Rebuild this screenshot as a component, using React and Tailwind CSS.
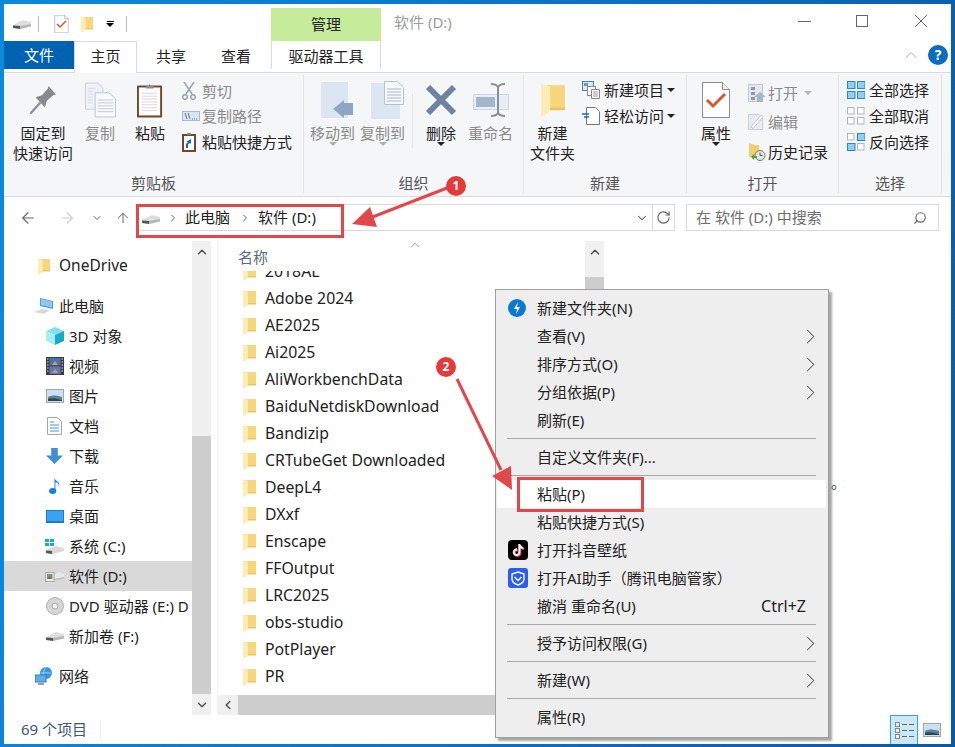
import React from 'react';
import { FaTiktok } from 'react-icons/fa';
import { ChevronUp, ChevronDown, ChevronLeft, ChevronRight, ArrowLeft, ArrowRight, ArrowUp, RotateCw, Search } from 'lucide-react';

/* ---------- icons ---------- */
const Folder = ({ className = 'w-[13px] h-[18px]' }) => (
  <svg viewBox="0 0 13 18" className={className}>
    <path d="M3 1h10v13H5z" fill="#f6d77c" />
    <path d="M0 0l5 2v11l-1 3-4 2z" fill="#fdedb4" />
    <path d="M5 13h8v1.500H4.500z" fill="#ebc565" />
  </svg>
);

const Drive = ({ className = 'w-[18px] h-[10px]' }) => (
  <svg viewBox="0 0 18 10" className={className}>
    <path d="M0 6l10-5 8 2v3L6 9 0 8.500z" fill="#dedede" />
    <path d="M0 6.500l7 .5v3l-7-1z" fill="#555" />
    <path d="M7 7l11-2v2.500L7 10z" fill="#b5b5b5" />
  </svg>
);

const CheckDoc = ({ className }) => (
  <svg viewBox="0 0 28 36" className={className}>
    <path d="M.5.500h20l7 7v28H.500z" fill="#fff" stroke="#8c8c8c" />
    <path d="M20.500.500v7h7" fill="#eee" stroke="#8c8c8c" />
    <path d="M5 18l6 6 12-12" fill="none" stroke="#d9572b" strokeWidth="3" />
  </svg>
);

const Pin = () => (
  <svg viewBox="0 0 28 30" className="w-[26px] h-[28px]">
    <path d="M0 30l11-12" stroke="#8a8d91" strokeWidth="2.500" />
    <path d="M6 12l7-2 6-7 1-3 8 9-3 1-7 6-2 7z" fill="#868a8e" />
  </svg>
);

const Pages = () => (
  <svg viewBox="0 0 32 36" className="w-[31px] h-[36px]">
    <path d="M.5.500h13l5 5v22H.500z" fill="#eef2f8" stroke="#c5d0de" />
    <path d="M10.500 10.500h14l7 6v19h-21z" fill="#f7f9fc" stroke="#b9c6d8" />
    <path d="M13 18h16M13 21h16M13 24h16M13 27h16M13 30h16" stroke="#c0cbdb" />
    <path d="M3 6h8M3 9h5M3 12h5M3 15h5M3 18h5M3 21h5" stroke="#d4dce8" />
  </svg>
);

const Clipboard = () => (
  <svg viewBox="0 0 28 37" className="w-[27px] h-[37px]">
    <rect x="0" y="3" width="26" height="33" rx="1" fill="#6d4a2e" />
    <rect x="2" y="5" width="22" height="29" fill="#fff" />
    <path d="M5 11h16M5 14h16M5 17h16M5 20h16M5 23h16M5 26h16M5 29h16" stroke="#d5d5d5" />
    <path d="M9 6V3h3l1-2 1 2h3v3z" fill="#8f8f8f" />
  </svg>
);

const Scissors = () => (
  <svg viewBox="0 0 14 18" className="w-[14px] h-[18px]" fill="none" stroke="#9aa3ad" strokeWidth="1.500">
    <path d="M2 0l8 12M12 0L4 12" />
    <circle cx="3" cy="15" r="2.300" />
    <circle cx="11" cy="15" r="2.300" />
  </svg>
);

const CopyPath = () => (
  <svg viewBox="0 0 18 10" className="w-[18px] h-[10px]">
    <rect x=".5" y=".5" width="17" height="9" fill="#dbe6f4" stroke="#a9b8cb" />
    <path d="M3 2l2 6M6 2l2 6M10 8h1M12 8h1M14 8h1" stroke="#64748b" />
  </svg>
);

const PasteLink = () => (
  <svg viewBox="0 0 14 20" className="w-[14px] h-[20px]">
    <rect x="0" y="2" width="14" height="18" fill="#6d4a2e" />
    <rect x="2" y="4" width="10" height="14" fill="#fff" />
    <path d="M5 3V1h4v2z" fill="#888" />
    <path d="M4 16v-4l2-2H4l5-3v5l-1.500-1L6 12.500V16z" fill="#1c66b8" />
  </svg>
);

const MoveTo = () => (
  <svg viewBox="0 0 33 36" className="w-[33px] h-[36px] ml-[10px]">
    <rect x="0" y="0" width="27" height="36" fill="#dce5f2" />
    <path d="M12 27l11-9v3h9v12h-9v3z" fill="#8fa6c2" />
  </svg>
);

const CopyTo = () => (
  <svg viewBox="0 0 33 38" className="w-[33px] h-[38px] ml-[10px]">
    <rect x="0" y="2" width="29" height="36" fill="#dce5f2" />
    <path d="M13.500 .500h13l6 6v17h-19z" fill="#f7f9fc" stroke="#b4c1d3" />
    <path d="M16 8h14M16 11h14M16 14h14M16 17h14M16 20h14" stroke="#aab7c9" />
  </svg>
);

const DeleteX = () => (
  <svg viewBox="0 0 32 32" className="w-[32px] h-[32px]">
    <path d="M3 3l26 26M29 3L3 29" stroke="#6d83a1" strokeWidth="6" />
  </svg>
);

const Rename = () => (
  <svg viewBox="0 0 36 34" className="w-[36px] h-[34px]">
    <rect x=".5" y="11.500" width="35" height="15" fill="#e8eef6" stroke="#cbd6e4" />
    <rect x="3" y="14" width="19" height="10" fill="#a5b5ca" />
    <path d="M18 1c4 0 6 1 7 3 1-2 3-3 7-3M25 4v26M18 33c4 0 6-1 7-3 1 2 3 3 7 3" fill="none" stroke="#8c9096" strokeWidth="2" />
  </svg>
);

const NewItem = () => (
  <svg viewBox="0 0 18 18" className="w-[18px] h-[18px]">
    <rect x=".5" y=".5" width="11" height="9" fill="#dfe9f5" stroke="#4d7fae" />
    <rect x="2" y="2" width="4" height="3" fill="#5e9bd2" />
    <rect x="5.500" y="5.500" width="8" height="9" fill="#fff" stroke="#888" />
    <path d="M9.500 8.500h8v9h-8z" fill="#fff" stroke="#888" />
    <path d="M11 11h5M11 13h5M11 15h5" stroke="#999" />
  </svg>
);

const EasyAccess = () => (
  <svg viewBox="0 0 18 18" className="w-[18px] h-[18px]">
    <path d="M4.500.500h9l4 4v13h-13z" fill="#fff" stroke="#777" />
    <path d="M0 7h7M2 10h5" stroke="#1b6cb5" strokeWidth="1.300" />
  </svg>
);

const OpenIcon = () => (
  <svg viewBox="0 0 18 18" className="w-[18px] h-[18px]">
    <rect x=".5" y=".5" width="14" height="17" fill="#e3e8ef" stroke="#c0c9d4" />
    <path d="M3 3h4v3H3zM3 8h4v3H3zM3 13h4v3H3z" fill="#8d99a8" />
    <path d="M12 8l6 5h-3v5H9v-5H6z" fill="#a8b6c7" />
  </svg>
);

const EditIcon = () => (
  <svg viewBox="0 0 18 18" className="w-[16px] h-[18px]">
    <path d="M.5.500h12l4 4v13H.500z" fill="#e6ebf2" stroke="#c3ccd8" />
    <path d="M3 15L15 1l2 2L6 16z" fill="#fff" stroke="#b7c2d0" />
  </svg>
);

const HistoryIcon = () => (
  <svg viewBox="0 0 18 18" className="w-[18px] h-[18px]">
    <path d="M1 0l6 2h4v12H1z" fill="#f2cf6e" />
    <circle cx="12" cy="12.500" r="5" fill="#e4e4e4" stroke="#777" />
    <path d="M12 9.500v3h2.500" stroke="#555" fill="none" />
    <path d="M3 14l3-3v2h3v2H6v2z" fill="#46a53a" />
  </svg>
);

const Squares = ({ cells }) => (
  <svg viewBox="0 0 18 18" className="w-[18px] h-[18px]">
    {cells.map((on, i) => {
      const x = i % 2 === 0 ? 0.5 : 10.5;
      const y = i < 2 ? 0.5 : 10.5;
      return on ? (
        <rect key={i} x={x} y={y} width="7.500" height="7" fill="#93cdf3" stroke="#2d86c8" />
      ) : (
        <rect key={i} x={x} y={y} width="6.500" height="6.500" fill="#fff" stroke="#b5b5b5" />
      );
    })}
  </svg>
);

const PcIcon = () => (
  <svg viewBox="0 0 20 18" className="w-[20px] h-[18px]">
    <path d="M6 1l13 3v8L6 9z" fill="#4a9be0" />
    <path d="M7 2l11 2.500v6L7 8z" fill="#8fc8f2" />
    <path d="M0 15l8-3 8 1-6 4z" fill="#d8d8d8" />
  </svg>
);

const Cube = () => (
  <svg viewBox="0 0 18 18" className="w-[18px] h-[18px]">
    <path d="M9 0l9 4-9 4-9-4z" fill="#7fe0ef" />
    <path d="M0 4l9 4v10l-9-4z" fill="#a9ecf6" />
    <path d="M18 4L9 8v10l9-4z" fill="#19a9c9" />
  </svg>
);

const Film = () => (
  <svg viewBox="0 0 18 18" className="w-[18px] h-[18px]">
    <rect width="18" height="18" fill="#3c3c3c" />
    <rect x="3.500" y="1" width="11" height="7.500" fill="#4b6fb7" />
    <rect x="3.500" y="9.500" width="11" height="7.500" fill="#5e78bf" />
    <path d="M6 8l3-4 3 4zM6 16l3-4 3 4z" fill="#c9a342" />
    <path d="M1 2h1.500M1 5h1.500M1 8h1.500M1 11h1.500M1 14h1.500M15.500 2H17M15.500 5H17M15.500 8H17M15.500 11H17M15.500 14H17" stroke="#ddd" />
  </svg>
);

const Picture = ({ className = 'w-[18px] h-[14px]' }) => (
  <svg viewBox="0 0 18 14" className={className}>
    <rect x=".5" y=".5" width="17" height="13" fill="#c8e0f2" stroke="#a5a5a5" />
    <path d="M2 8c4-2 9-2 14 0v4H2z" fill="#5e7f8f" />
    <path d="M2 10c5-1 9 0 14 1v1H2z" fill="#2d4552" />
  </svg>
);

const DocIcon = () => (
  <svg viewBox="0 0 15 18" className="w-[15px] h-[18px]">
    <path d="M.5.500h10l4 4v13H.500z" fill="#fbfbfb" stroke="#a5a5a5" />
    <path d="M3 5h4M3 8h9M3 11h9M3 14h9" stroke="#4b9ad5" />
  </svg>
);

const DownIcon = () => (
  <svg viewBox="0 0 18 17" className="w-[17px] h-[16px]">
    <path d="M5.500 0h7v8H18l-9 9-9-9h5.500z" fill="#3f8edb" />
  </svg>
);

const Music = () => (
  <svg viewBox="0 0 12 18" className="w-[11px] h-[18px]">
    <ellipse cx="4" cy="14.500" rx="4" ry="3.300" fill="#1682dc" />
    <path d="M7 1v13H6V0c1 4 6 4 5 9-1-3-2-4-4-4z" fill="#1682dc" />
  </svg>
);

const Desktop = () => (
  <svg viewBox="0 0 18 13" className="w-[18px] h-[13px]">
    <rect width="18" height="13" fill="#0f7fd6" />
    <rect x="1" y="1" width="16" height="10" fill="#3ba3ef" />
  </svg>
);

const WinDrive = () => (
  <svg viewBox="0 0 20 15" className="w-[20px] h-[15px]">
    <path d="M0 0h4v3H0zM5 0h4v3H5zM0 4h4v3H0zM5 4h4v3H5z" fill="#18a9d8" />
    <path d="M1 11l10-4 8 2v3l-12 3-6-1z" fill="#d9d9d9" />
    <path d="M1 11.500l6 .5v3l-6-1z" fill="#555" />
  </svg>
);

const PicDrive = () => (
  <svg viewBox="0 0 19 11" className="w-[19px] h-[11px]">
    <path d="M8 5l6-4 5 2v3L8 9z" fill="#e8e8e8" />
    <path d="M9 8l10-2v1.500L9 9.500z" fill="#bdbdbd" />
    <rect x=".5" y="1.500" width="8.500" height="9" fill="#eee" stroke="#aaa" />
    <path d="M2 3h5.500v5H2z" fill="#6f9a7a" />
    <path d="M2.500 8l2-3 2 3z" fill="#a84f4f" />
  </svg>
);

const Dvd = () => (
  <svg viewBox="0 0 18 18" className="w-[18px] h-[18px]">
    <circle cx="9" cy="9" r="8.500" fill="#d6d6d6" stroke="#b0b0b0" />
    <circle cx="9" cy="9" r="3" fill="#f1f1f1" stroke="#aaa" />
  </svg>
);

const NetIcon = () => (
  <svg viewBox="0 0 18 18" className="w-[18px] h-[18px]">
    <circle cx="11" cy="6" r="6" fill="#3b95d9" />
    <path d="M6 6h10M11 0c-3 3-3 9 0 12" stroke="#9fd0f2" fill="none" />
    <rect x="0" y="8" width="11" height="7" fill="#5cb0ea" stroke="#2c7fc0" />
    <path d="M3 17h6" stroke="#9a9a9a" strokeWidth="2" />
  </svg>
);

const SmallDown = ({ className = 'border-t-[#222]' }) => (
  <span className={`inline-block w-0 h-0 border-x-[4px] border-x-transparent border-t-[4px] ${className}`} />
);

const MenuArrow = () => (
  <svg viewBox="0 0 10 18" className="w-[9px] h-[15px] ml-auto mr-[11px]" fill="none" stroke="#333" strokeWidth="1.200">
    <path d="M1 1l8 8-8 8" />
  </svg>
);

/* ---------- ribbon ---------- */
const BigButton = ({ icon, lines, muted, arrow, className = '' }) => (
  <div className={`flex flex-col items-center pt-[7px] ${className}`}>
    <div className="h-[36px] flex items-center justify-center">{icon}</div>
    <div className={`mt-[5px] text-center leading-[20px] whitespace-nowrap ${muted ? 'text-[#8a8a8a]' : 'text-[#222]'}`}>
      {lines.map((l) => (
        <div key={l}>{l}</div>
      ))}
    </div>
    {arrow && (
      <div className="flex -mt-[1px]">
        <SmallDown className={muted ? 'border-t-[#b0b0b0]' : 'border-t-[#222]'} />
      </div>
    )}
  </div>
);

const SmallButton = ({ icon, label, muted, arrow, className = '' }) => (
  <div className={`flex items-center whitespace-nowrap leading-[20px] ${muted ? 'text-[#8a8a8a]' : 'text-[#222]'} ${className}`}>
    <span className="w-[20px] flex justify-start">{icon}</span>
    <span>{label}</span>
    {arrow}
  </div>
);

const Group = ({ width, label, children, last }) => (
  <div className={`${width} shrink-0 h-[118px] flex flex-col ${last ? '' : 'border-r border-[#e2e3e4]'}`}>
    <div className="flex h-[98px]">{children}</div>
    <div className="h-[20px] leading-[20px] text-center text-[#555]">{label}</div>
  </div>
);

const Ribbon = () => (
  <div className="h-[124px] bg-[#f5f6f7] border-b border-[#dadbdc] flex pt-[2px]">
    <Group width="w-[300px]" label="剪贴板">
      <BigButton icon={<Pin />} lines={['固定到', '快速访问']} className="w-[60px] ml-[9px]" />
      <BigButton icon={<Pages />} lines={['复制']} muted className="w-[40px] ml-[7px]" />
      <BigButton icon={<Clipboard />} lines={['粘贴']} className="w-[40px] ml-[10px]" />
      <div className="ml-[12px] pt-[3px] flex flex-col">
        <SmallButton icon={<Scissors />} label="剪切" muted className="h-[25px]" />
        <SmallButton icon={<CopyPath />} label="复制路径" muted className="h-[26px]" />
        <SmallButton icon={<PasteLink />} label="粘贴快捷方式" className="h-[26px]" />
      </div>
    </Group>
    <Group width="w-[220px]" label="组织">
      <BigButton icon={<MoveTo />} lines={['移动到']} muted arrow className="w-[45px] ml-[6px]" />
      <BigButton icon={<CopyTo />} lines={['复制到']} muted arrow className="w-[45px] ml-[5px]" />
      <div className="w-px h-[54px] mt-[19px] ml-[7px] bg-[#e2e3e4]" />
      <BigButton icon={<DeleteX />} lines={['删除']} arrow className="w-[30px] ml-[13px]" />
      <BigButton icon={<Rename />} lines={['重命名']} muted className="w-[45px] ml-[12px]" />
    </Group>
    <Group width="w-[163px]" label="新建">
      <BigButton icon={<Folder className="w-[24px] h-[34px]" />} lines={['新建', '文件夹']} className="w-[45px] ml-[6px]" />
      <div className="ml-[7px] pt-[2px] flex flex-col">
        <SmallButton
          icon={<NewItem />}
          label="新建项目"
          className="h-[26px] [&>span:first-child]:w-[22px]"
          arrow={<span className="ml-[3px] flex"><SmallDown /></span>}
        />
        <SmallButton
          icon={<EasyAccess />}
          label="轻松访问"
          className="h-[26px] [&>span:first-child]:w-[22px]"
          arrow={<span className="ml-[3px] flex"><SmallDown /></span>}
        />
      </div>
    </Group>
    <Group width="w-[152px]" label="打开">
      <BigButton icon={<CheckDoc className="w-[28px] h-[36px]" />} lines={['属性']} arrow className="w-[30px] ml-[14px]" />
      <div className="ml-[17px] pt-[5px] flex flex-col">
        <SmallButton
          icon={<OpenIcon />}
          label="打开"
          muted
          className="h-[26px] mb-[1px]"
          arrow={<span className="ml-[6px] flex"><SmallDown className="border-t-[#b8b8b8]" /></span>}
        />
        <SmallButton icon={<EditIcon />} label="编辑" muted className="h-[30px]" />
        <SmallButton icon={<HistoryIcon />} label="历史记录" className="h-[30px]" />
      </div>
    </Group>
    <Group width="w-[103px]" label="选择">
      <div className="ml-[8px] pt-[2px] flex flex-col">
        <SmallButton icon={<Squares cells={[1, 1, 1, 1]} />} label="全部选择" className="h-[26px] [&>span:first-child]:w-[22px]" />
        <SmallButton icon={<Squares cells={[0, 0, 0, 0]} />} label="全部取消" className="h-[26px] [&>span:first-child]:w-[22px]" />
        <SmallButton icon={<Squares cells={[0, 1, 1, 0]} />} label="反向选择" className="h-[26px] [&>span:first-child]:w-[22px]" />
      </div>
    </Group>
  </div>
);

/* ---------- sidebar / list data ---------- */
const navItems = [
  { icon: <Folder className="w-[12px] h-[17px]" />, label: 'OneDrive', top: true, first: true, wide: true },
  { icon: <PcIcon />, label: '此电脑', top: true, gap: true },
  { icon: <Cube />, label: '3D 对象' },
  { icon: <Film />, label: '视频' },
  { icon: <Picture />, label: '图片' },
  { icon: <DocIcon />, label: '文档' },
  { icon: <DownIcon />, label: '下载' },
  { icon: <Music />, label: '音乐' },
  { icon: <Desktop />, label: '桌面' },
  { icon: <WinDrive />, label: '系统 (C:)' },
  { icon: <PicDrive />, label: '软件 (D:)', selected: true },
  { icon: <Dvd />, label: 'DVD 驱动器 (E:) D' },
  { icon: <Drive />, label: '新加卷 (F:)' },
  { icon: <NetIcon />, label: '网络', top: true, gap: true },
];

const files = [
  '2018AL', 'Adobe 2024', 'AE2025', 'Ai2025', 'AliWorkbenchData', 'BaiduNetdiskDownload', 'Bandizip',
  'CRTubeGet Downloaded', 'DeepL4', 'DXxf', 'Enscape', 'FFOutput', 'LRC2025', 'obs-studio', 'PotPlayer', 'PR',
];

const ScrollBtn = ({ children }) => (
  <div className="h-[21px] shrink-0 flex items-center justify-center bg-[#f0f0f0] text-[#505050]">{children}</div>
);

/* ---------- context menu ---------- */
const menu = [
  { label: '新建文件夹(N)', icon: 'bolt' },
  { label: '查看(V)', sub: true },
  { label: '排序方式(O)', sub: true },
  { label: '分组依据(P)', sub: true },
  { label: '刷新(E)' },
  { sep: true },
  { label: '自定义文件夹(F)...' },
  { sep: true },
  { label: '粘贴(P)', hot: true },
  { label: '粘贴快捷方式(S)' },
  { label: '打开抖音壁纸', icon: 'tiktok' },
  { label: '打开AI助手（腾讯电脑管家）', icon: 'shield' },
  { label: '撤消 重命名(U)', shortcut: 'Ctrl+Z' },
  { sep: true },
  { label: '授予访问权限(G)', sub: true },
  { sep: true },
  { label: '新建(W)', sub: true },
  { sep: true },
  { label: '属性(R)' },
];

const MenuIcon = ({ name }) => {
  if (name === 'bolt') {
    return (
      <svg viewBox="0 0 18 18" className="w-[18px] h-[18px]">
        <circle cx="9" cy="9" r="9" fill="#0a78d4" />
        <path d="M10 3L6 10h3l-1 5 4-7H9z" fill="#fff" />
      </svg>
    );
  }
  if (name === 'tiktok') {
    return (
      <span className="w-[20px] h-[20px] rounded-[4px] bg-black flex items-center justify-center text-white text-[12px]">
        <FaTiktok className="drop-shadow-[1px_1px_0_#ff2d55]" />
      </span>
    );
  }
  return (
    <span className="w-[20px] h-[20px] rounded-[3px] bg-[#2b5df0] flex items-center justify-center">
      <svg viewBox="0 0 14 15" className="w-[14px] h-[15px]" fill="none" stroke="#fff" strokeWidth="1.400">
        <path d="M7 1l6 2v5c0 3-3 5-6 6-3-1-6-3-6-6V3z" />
        <path d="M3.500 6L7 9.500 10.500 6" />
      </svg>
    </span>
  );
};

const ContextMenu = () => (
  <div className="absolute left-[495px] top-[289px] w-[334px] h-[449px] bg-[#eeeeee] border border-[#a0a0a0] shadow-[3px_3px_2px_rgba(0,0,0,0.35)] py-[4px] pl-[1px] pr-[2px]">
    {menu.map((m, i) =>
      m.sep ? (
        <div key={i} className="h-[9px] flex items-center pl-[10px] pr-[10px]">
          <div className="h-px w-full bg-[#a8a8a8]" />
        </div>
      ) : (
        <div key={i} className={`h-[28px] flex items-center text-[#222] ${m.hot ? 'bg-white' : ''}`}>
          <span className="w-[40px] pl-[11px] flex justify-start shrink-0">{m.icon && <MenuIcon name={m.icon} />}</span>
          <span className="whitespace-nowrap">{m.label}</span>
          {m.sub && <MenuArrow />}
          {m.shortcut && <span className="ml-auto mr-[20px] text-[16px]">{m.shortcut}</span>}
        </div>
      )
    )}
  </div>
);

/* ---------- page ---------- */
export default function App() {
  return (
    <div className="relative w-[955px] h-[747px] overflow-hidden bg-[linear-gradient(100deg,#0a8ade_0%,#0a6fc4_60%,#0a59a6_100%)] pt-[4px] pl-[4px] pr-[4px] pb-[3px] text-[15px] font-['Noto_Sans','Noto_Sans_CJK_SC',sans-serif]">
      <div className="w-[947px] h-[740px] bg-white flex flex-col">
        {/* Title bar */}
        <div className="h-[37px] flex shrink-0">
          <div className="flex items-center pl-[9px] w-[267px] pt-[3px]">
            <Drive />
            <div className="w-px h-[16px] bg-[#bbb] ml-[7px]" />
            <CheckDoc className="w-[15px] h-[18px] ml-[15px]" />
            <Folder className="w-[12px] h-[17px] ml-[12px]" />
            <span className="ml-[13px] flex flex-col items-center">
              <span className="w-[7px] h-px bg-black mb-[1px]" />
              <SmallDown className="border-t-black" />
            </span>
            <div className="w-px h-[16px] bg-[#bbb] ml-[12px]" />
          </div>
          <div className="mt-[4px] h-[33px] w-[110px] bg-[#c6ec9b] text-[#222] flex items-center justify-center">管理</div>
          <div className="ml-[13px] pt-[8px] text-[#9b9b9b] leading-[20px]">软件 (D:)</div>
          <div className="ml-auto flex items-start pt-[11px] pr-[24px] text-[#666]">
            <div className="w-[13px] h-px bg-[#666] mt-[6px] mr-[45px]" />
            <div className="w-[12px] h-[12px] border border-[#666] mr-[47px]" />
            <svg viewBox="0 0 12 12" className="w-[12px] h-[12px]" stroke="#666"><path d="M0 0l12 12M12 0L0 12" /></svg>
          </div>
        </div>

        {/* Tabs */}
        <div className="h-[32px] flex shrink-0 border-b border-[#dadbdc] text-[#222]">
          <div className="w-[70px] h-[28px] bg-[#0063b1] text-white flex items-center justify-center">文件</div>
          <div className="w-[63px] h-[32px] -mb-px pb-[2px] bg-white border-x border-t border-[#dadbdc] flex items-center justify-center">主页</div>
          <div className="w-[68px] h-[31px] flex items-center justify-center">共享</div>
          <div className="w-[62px] h-[31px] flex items-center justify-center">查看</div>
          <div className="ml-[4px] w-[110px] h-[28px] pt-[2px] border-x border-[#dadbdc] flex items-center justify-center">驱动器工具</div>
          <div className="ml-auto flex items-center pr-[3px] pb-[4px]">
            <ChevronUp className="w-[20px] h-[20px] text-[#aaa] mr-[7px]" strokeWidth={1.200} />
            <div className="w-[20px] h-[20px] rounded-full bg-[#0b6cc0] text-white font-bold text-[14px] flex items-center justify-center">?</div>
          </div>
        </div>

        <Ribbon />

        {/* Address bar */}
        <div className="h-[40px] flex items-center shrink-0 pt-[7px] pb-[6px] relative">
          <div className="w-[132px] flex items-center shrink-0">
            <ArrowLeft className="w-[18px] h-[18px] ml-[15px] text-[#666]" strokeWidth={1.500} />
            <ArrowRight className="w-[18px] h-[18px] ml-[21px] text-[#ccc]" strokeWidth={1.500} />
            <ChevronDown className="w-[12px] h-[12px] ml-[15px] text-[#666]" strokeWidth={2} />
            <ArrowUp className="w-[16px] h-[16px] ml-[12px] text-[#666]" strokeWidth={1.500} />
          </div>
          <div className="w-[539px] h-[27px] border border-[#d9d9d9] flex items-center text-[#222]">
            <Drive className="w-[18px] h-[10px] ml-[5px] mt-[3px]" />
            <ChevronRight className="w-[12px] h-[12px] ml-[7px] text-[#666]" />
            <span className="ml-[6px]">此电脑</span>
            <ChevronRight className="w-[12px] h-[12px] ml-[9px] text-[#666]" />
            <span className="ml-[7px]">软件 (D:)</span>
            <ChevronDown className="w-[14px] h-[14px] ml-auto mr-[2px] text-[#555]" strokeWidth={1.800} />
            <div className="w-px h-[25px] bg-[#d9d9d9] ml-[1px]" />
            <RotateCw className="w-[15px] h-[15px] mx-[3px] text-[#666]" strokeWidth={1.800} />
          </div>
          <div className="ml-[11px] w-[253px] h-[27px] border border-[#d9d9d9] flex items-center pl-[9px] text-[#6d6d6d]">
            <span>在 软件 (D:) 中搜索</span>
            <Search className="w-[14px] h-[14px] ml-auto mr-[11px] -scale-x-100 text-[#666]" strokeWidth={2} />
          </div>
        </div>

        {/* Main */}
        <div className="h-[478px] flex shrink-0 relative">
          <nav className="w-[188px] shrink-0 pt-[14px] overflow-hidden text-[#222]">
            {navItems.map((n) => (
              <div
                key={n.label}
                className={`h-[30px] flex items-center whitespace-nowrap ${n.gap ? 'mt-[10px]' : ''} ${n.selected ? 'bg-[#d9d9d9]' : ''}`}
              >
                <span className={`shrink-0 flex justify-center ${n.top ? 'w-[55px] pl-[28px] pr-[3px]' : 'w-[65px] pl-[40px] pr-[4px]'}`}>
                  {n.icon}
                </span>
                <span className={`shrink-0 ${n.wide ? 'text-[15.500px]' : ''}`}>{n.label}</span>
              </div>
            ))}
          </nav>

          {/* Sidebar scrollbar */}
          <div className="w-[19px] shrink-0 mt-[4px] flex flex-col bg-[#f0f0f0]">
            <ScrollBtn><ChevronUp className="w-[14px] h-[14px]" strokeWidth={2.500} /></ScrollBtn>
            <div className="flex-1 flex flex-col justify-end">
              <div className="h-[258px] bg-[#cdcdcd]" />
            </div>
            <ScrollBtn><ChevronDown className="w-[14px] h-[14px]" strokeWidth={2.500} /></ScrollBtn>
          </div>

          {/* File list */}
          <div className="ml-[6px] w-[387px] shrink-0 flex flex-col border-l border-[#f2f2f2]">
            <div className="flex-1 flex min-h-0">
              <div className="w-[367px] shrink-0 flex flex-col">
                <div className="h-[34px] shrink-0 relative">
                  <span className="absolute left-[20px] top-[10px] text-[#5a6a80] leading-[20px]">名称</span>
                  <ChevronUp className="absolute left-[190px] top-[1px] w-[14px] h-[14px] text-[#888]" strokeWidth={1.500} />
                </div>
                <div className="flex-1 min-h-0 overflow-hidden text-[#222] text-[15.800px]">
                  <div className="-mt-[13px]">
                    {files.map((f) => (
                      <div key={f} className="h-[27px] flex items-center pl-[25px] whitespace-nowrap">
                        <Folder className="w-[13px] h-[18px] shrink-0" />
                        <span className="ml-[9px]">{f}</span>
                      </div>
                    ))}
                  </div>
                </div>
              </div>
              <div className="w-[19px] shrink-0 mt-[4px] flex flex-col bg-[#f0f0f0]">
                <ScrollBtn><ChevronUp className="w-[14px] h-[14px]" strokeWidth={2.500} /></ScrollBtn>
                <div className="mt-[15px] flex-1 bg-[#cdcdcd]" />
              </div>
            </div>
            {/* Horizontal scrollbar */}
            <div className="h-[20px] shrink-0 flex bg-[#f0f0f0]">
              <div className="w-[20px] flex items-center justify-center text-[#505050]">
                <ChevronLeft className="w-[14px] h-[14px]" strokeWidth={2.500} />
              </div>
              <div className="w-[265px] bg-[#cdcdcd]" />
            </div>
          </div>
        </div>

        {/* Status bar */}
        <div className="flex-1 flex items-center pl-[17px] text-[#45566e]">
          <span>69 个项目</span>
          <div className="ml-[13px] w-px h-[20px] bg-[#f0f0f0]" />
          <div className="ml-auto mr-[10px] flex items-center self-stretch">
            <div className="w-[28px] h-[29px] bg-[#cbe8f6] border-x border-t border-[#3da3c8] flex flex-col items-center justify-center gap-[1px] mr-[5px]">
              {[0, 1, 2].map((i) => (
                <div key={i} className="flex items-center gap-[2px]">
                  <span className="w-[5px] h-[5px] bg-[#eee] border border-[#888]" />
                  <span className="w-[5px] h-px bg-[#666]" />
                  <span className="w-[5px] h-px bg-[#666]" />
                </div>
              ))}
            </div>
            <Picture className="w-[18px] h-[14px]" />
          </div>
        </div>
      </div>

      <ContextMenu />
      <span className="absolute left-[831px] top-[472px] text-[#444] leading-[20px]">。</span>

      {/* Annotations */}
      <div className="absolute left-[136px] top-[204px] w-[208px] h-[34px] border-[3px] border-[#e0484c]" />
      <div className="absolute left-[517px] top-[477px] w-[127px] h-[35px] border-[3px] border-[#e0484c]" />
      <svg className="absolute inset-0 w-[955px] h-[747px] pointer-events-none" viewBox="0 0 955 747">
        <path d="M447 188L370 218" stroke="#e0484c" strokeWidth="3" />
        <path d="M352 224l18-17 7 20z" fill="#e0484c" />
        <path d="M457 379L501 470" stroke="#e0484c" strokeWidth="3" />
        <path d="M512 490l-20-14 19-10z" fill="#e0484c" />
      </svg>
      <div className="absolute left-[446px] top-[176px] w-[20px] h-[20px] rounded-full bg-[#e53a3a] text-white text-[12px] font-bold flex items-center justify-center">1</div>
      <div className="absolute left-[436px] top-[357px] w-[20px] h-[20px] rounded-full bg-[#e53a3a] text-white text-[12px] font-bold flex items-center justify-center">2</div>
    </div>
  );
}
